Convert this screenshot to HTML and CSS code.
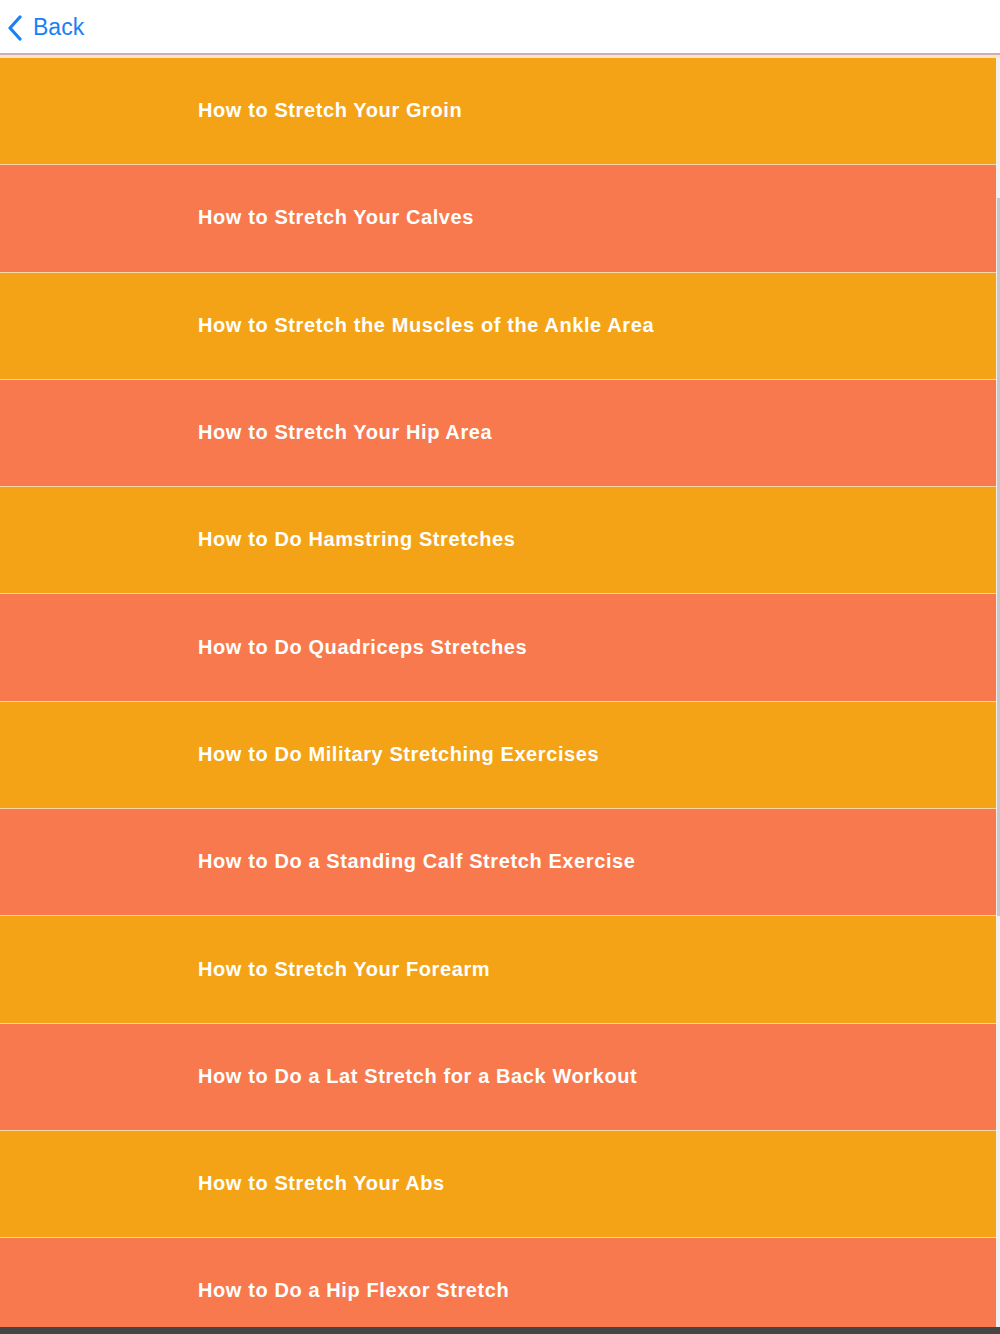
FILE: index.html
```html
<!DOCTYPE html>
<html lang="en">
<head>
    <meta charset="UTF-8">
    <meta name="viewport" content="width=device-width, initial-scale=1.0">
    <title>Stretching</title>
    <link rel="stylesheet" href="styles.css">
</head>
<body>
    <!-- Top bar -->
    <div class="topbar">
        <a class="back-link" href="#">
            <svg class="back-icon" width="16" height="26" viewBox="0 0 16 26">
                <path d="M13 2 L3 13 L13 24" fill="none" stroke="#1a80f5" stroke-width="3.2" stroke-linecap="round" stroke-linejoin="round"/>
            </svg>
            <span>Back</span>
        </a>
    </div>

    <!-- List -->
    <div class="page">
        <ul class="list">
            <li class="item item-orange">How to Stretch Your Groin</li>
            <li class="item item-coral">How to Stretch Your Calves</li>
            <li class="item item-orange">How to Stretch the Muscles of the Ankle Area</li>
            <li class="item item-coral">How to Stretch Your Hip Area</li>
            <li class="item item-orange">How to Do Hamstring Stretches</li>
            <li class="item item-coral">How to Do Quadriceps Stretches</li>
            <li class="item item-orange">How to Do Military Stretching Exercises</li>
            <li class="item item-coral">How to Do a Standing Calf Stretch Exercise</li>
            <li class="item item-orange">How to Stretch Your Forearm</li>
            <li class="item item-coral">How to Do a Lat Stretch for a Back Workout</li>
            <li class="item item-orange">How to Stretch Your Abs</li>
            <li class="item item-coral">How to Do a Hip Flexor Stretch</li>
        </ul>
        <div class="scroll-track">
            <div class="scroll-thumb"></div>
        </div>
    </div>

    <div class="bottom-bar"></div>
</body>
</html>
```

FILE: styles.css
```css
/* Reset */
* {
    margin: 0;
    padding: 0;
    box-sizing: border-box;
}

body {
    font-family: 'Liberation Sans', Arial, sans-serif;
    background: #fff;
    width: 1000px;
    height: 1334px;
    overflow: hidden;
    display: flex;
    flex-direction: column;
}

/* Top bar */
.topbar {
    height: 58px;
    border-bottom: 3px solid #fde3c8;
    box-shadow: inset 0 -2px 0 #cdaeae;
    display: flex;
    align-items: flex-start;
    padding: 14px 0 0 7px;
}

.back-link {
    display: flex;
    align-items: center;
    gap: 10px;
    color: #1a80f5;
    text-decoration: none;
    font-size: 23px;
}

.back-icon {
    display: block;
}

/* List area */
.page {
    flex: 1;
    display: flex;
    overflow: hidden;
}

.list {
    list-style: none;
    width: 996px;
}

.item {
    height: 107.3px;
    display: flex;
    align-items: center;
    padding-left: 198px;
    padding-bottom: 1px;
    color: #fff;
    font-size: 20px;
    font-weight: bold;
    letter-spacing: 0.6px;
    border-bottom: 1.3px solid #fcd6a6;
}

.item-orange {
    background: #f5a316;
}

.item-coral {
    background: #f7794d;
}

/* Scrollbar strip */
.scroll-track {
    width: 4px;
    background: #f3eeee;
    padding-top: 140px;
}

.scroll-thumb {
    margin-left: 1px;
    width: 3px;
    height: 718px;
    background: #c9c6c9;
}

.bottom-bar {
    height: 7px;
    background: #454545;
}
```
